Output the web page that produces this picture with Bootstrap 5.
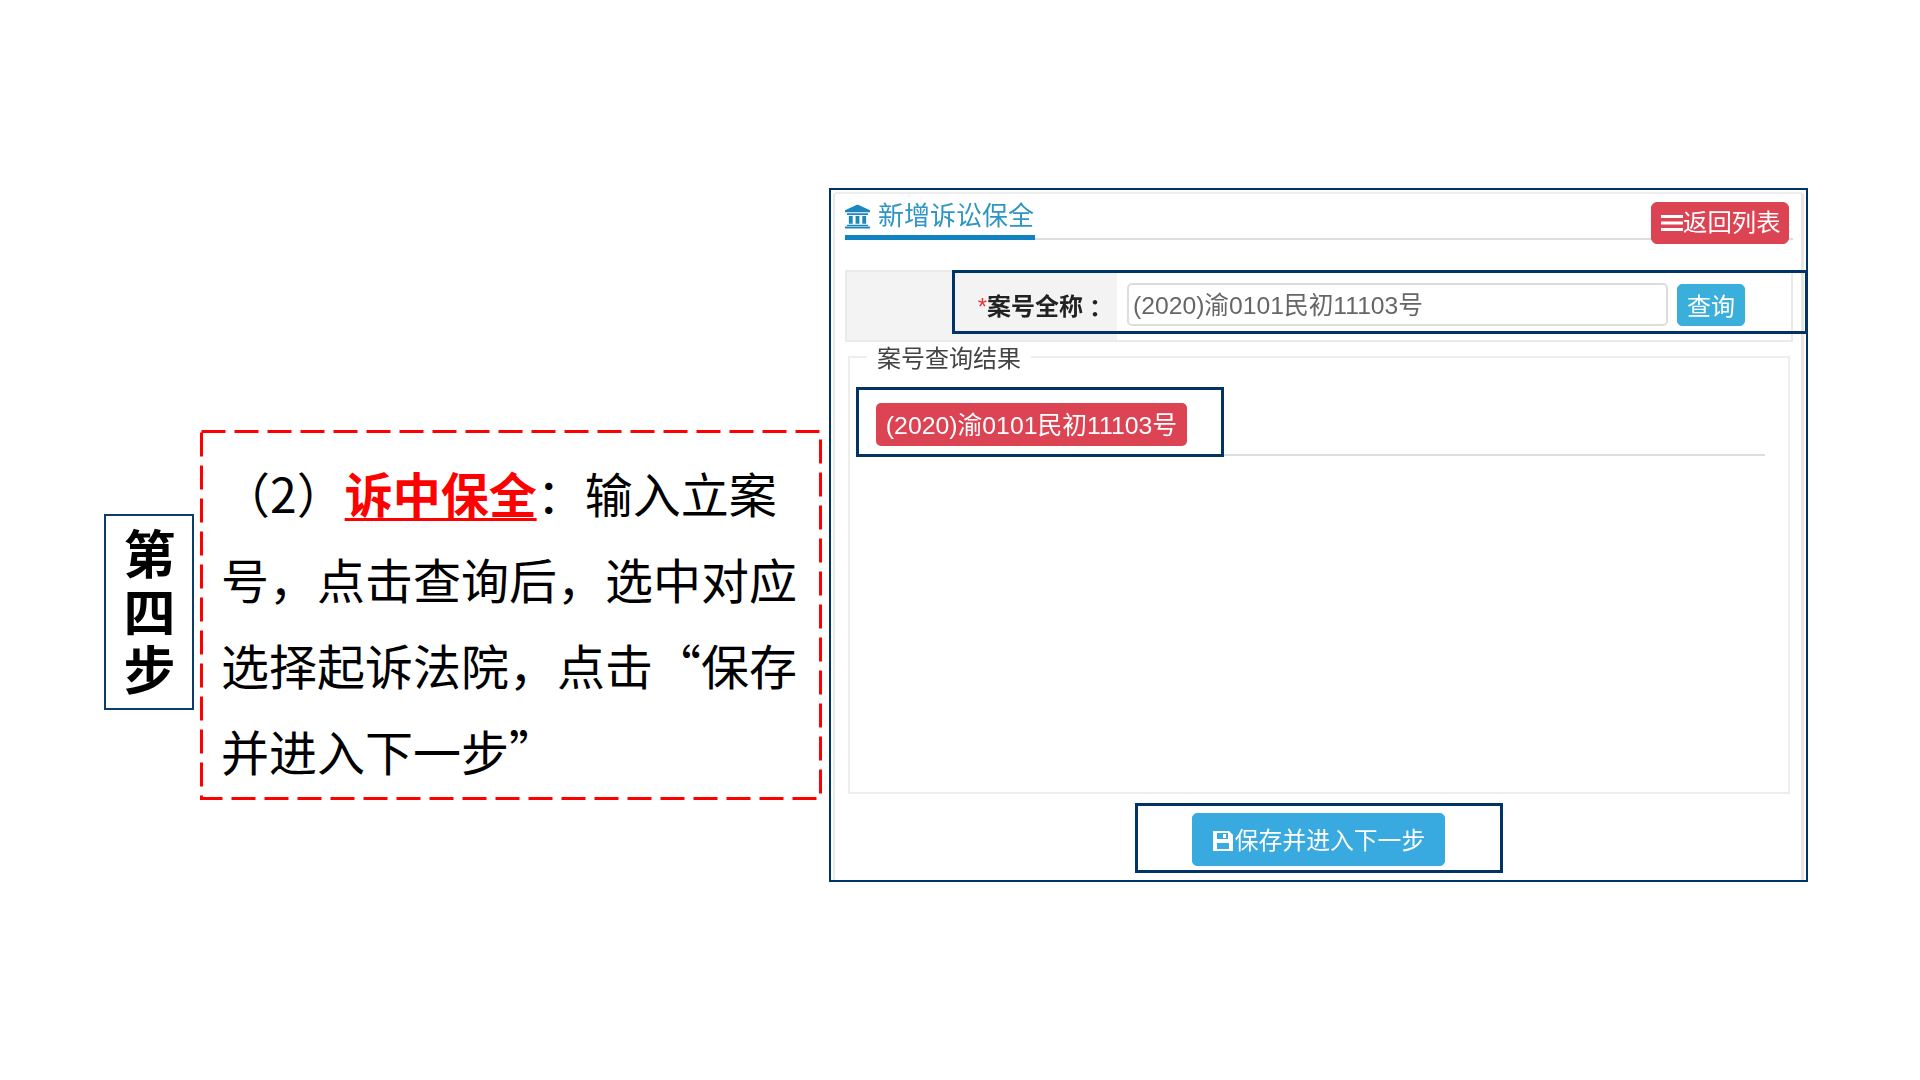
<!DOCTYPE html>
<html lang="zh-CN">
<head>
<meta charset="utf-8">
<title>新增诉讼保全</title>
<link href="https://cdn.jsdelivr.net/npm/bootstrap@5.3.0/dist/css/bootstrap.min.css" rel="stylesheet">
<style>
html,body{height:100%;background:#fff;overflow:hidden}
body{font-family:"Liberation Sans","Noto Sans CJK SC",sans-serif}
.stage{height:1080px;padding:188px 0 0 104px}
.step-box{width:90px;height:196px;margin-top:326px;border:2px solid #0b3c6f;font:700 52px/1 "Noto Sans CJK SC",sans-serif;color:#000}
.step-text{writing-mode:vertical-rl;text-orientation:upright;letter-spacing:6px;padding-top:5px}
.note-box{position:relative;width:622px;height:370px;margin:242px 0 0 6px;padding:19px 0 0 21px;font:400 48px/86px "Noto Sans CJK SC",sans-serif;color:#000;white-space:nowrap}
.note-frame{position:absolute;inset:0;width:100%;height:100%;pointer-events:none}
.note-lead{padding-left:1px}
.note-hot{color:#f00;font-weight:700;text-decoration:underline;text-underline-offset:5px;text-decoration-thickness:3px}
.shot{position:relative;width:979px;height:694px;margin-left:7px;border:2px solid #003366;background:#fff}
.shot-inner{height:calc(100% - 2px);margin:2px 2px 0;border:solid #eee;border-width:2px 3px 0 2px;border-left-color:#e8e8ec;border-right-color:#e6e6e6;border-radius:4px 4px 0 0;filter:blur(.7px);padding:8px 1px 0 2px}
.tab-row{height:38px;margin:0 7px 0 8px;border-bottom:2px solid #ddd}
.tab-title{width:190px;height:38px;border-bottom:5px solid #0f82c0;padding-bottom:5px;color:#2f96c4;font-size:26px;line-height:1;white-space:nowrap}
.tab-icon{width:25px;height:25px;margin-right:8px;flex:none}
.btn-back{width:138px;height:42px;margin-right:4px;padding:0 0 0 9px;background:#dc4353;border:1px solid #dc4353;border-radius:6px;color:#fff;font-size:24.4px;line-height:1;white-space:nowrap}
.btn-back svg{width:22px;height:18px;flex:none}
.query-row{height:72px;margin:30px 7px 0 8px;border:2px solid #eaeaea}
.query-label{width:270px;background:#f3f3f3;padding:2px 10px 0 0;font-size:24px;font-weight:700;color:#222;white-space:nowrap}
.query-star{color:#e33;font-weight:400}
.query-colon{font-family:"Noto Sans CJK TC",sans-serif}
.query-input.form-control{width:541px;height:43px;margin:11px 0 0 10px;padding:0 4px 3px;border:2px solid #ddd;border-radius:5px;color:#666;font-size:24.7px;background:#fff;box-shadow:none}
.btn-query{width:68px;height:42px;margin:12px 0 0 9px;padding:4px 0 0;background:#3aafdc;border:1px solid #3aafdc;border-radius:5px;color:#fff;font-size:24px;line-height:1}
.result-set{height:451px;margin:1px 10px 0 11px;padding:0 0 0 16px;border:2px solid #eee}
.result-set legend{float:none;width:auto;margin:0 0 0 1px;padding:4px 10px 0;font-size:24px;line-height:24px;color:#444}
.result-row{height:85px;margin-right:23px;padding:32px 0 0 10px;border-bottom:2px solid #ddd}
.tag-case{display:block;width:311px;height:43px;background:#dc4353;border-radius:5px;color:#fff;font-size:24.8px;line-height:45px;text-align:center;white-space:nowrap}
.save-row{margin-top:19px}
.btn-save{width:253px;height:53px;padding:3px 0 0;background:#39aadf;border:1px solid #39aadf;border-radius:5px;color:#fff;font-size:23.8px;line-height:1;white-space:nowrap}
.btn-save svg{width:22px;height:22px;flex:none;margin-right:1px}
.callout{position:absolute;border:3px solid #003366;pointer-events:none}
.callout-query{left:121px;top:80px;right:-2px;height:64px}
.callout-result{left:25px;top:197px;width:368px;height:70px}
.callout-save{left:304px;top:613px;width:368px;height:70px}
</style>
</head>
<body>
<main class="stage d-flex align-items-start">
  <div class="step-box d-flex justify-content-center align-items-center"><div class="step-text">第四步</div></div>
  <div class="note-box">
    <svg class="note-frame" viewBox="0 0 622 370" aria-hidden="true"><rect x="1.5" y="1.5" width="619" height="367" fill="none" stroke="#f00" stroke-width="3" stroke-dasharray="24 9"/></svg>
    <div class="note-lead">（2）<span class="note-hot">诉中保全</span>：输入立案</div>
    <div>号，点击查询后，选中对应</div>
    <div>选择起诉法院，点击“保存</div>
    <div>并进入下一步”</div>
  </div>
  <section class="shot">
    <div class="shot-inner">
      <div class="tab-row d-flex justify-content-between align-items-start">
        <div class="tab-title d-flex align-items-center">
          <svg class="tab-icon" viewBox="0 0 26 25" aria-hidden="true"><path fill="#1c86bd" d="M13 0 26 6v2H0V6zM2 9h22v2H2zM4 12h4v8H4zM11 12h4v8h-4zM18 12h4v8h-4zM2 21h22v1.500H2zM0 23h26v2H0z"/></svg>
          新增诉讼保全
        </div>
        <button type="button" class="btn btn-back d-flex align-items-center">
          <svg viewBox="0 0 22 18" aria-hidden="true"><path fill="#fff" d="M0 1h22v3H0zM0 7.500h22v3H0zM0 14h22v3H0z"/></svg>返回列表
        </button>
      </div>
      <div class="query-row d-flex">
        <div class="query-label d-flex align-items-center justify-content-end"><span class="query-star">*</span>案号全称<span class="query-colon">：</span></div>
        <input class="form-control query-input" type="text" value="(2020)渝0101民初11103号" aria-label="案号全称">
        <button type="button" class="btn btn-query">查询</button>
      </div>
      <fieldset class="result-set">
        <legend>案号查询结果</legend>
        <div class="result-row"><span class="tag-case">(2020)渝0101民初11103号</span></div>
      </fieldset>
      <div class="save-row d-flex justify-content-center">
        <button type="button" class="btn btn-save d-flex align-items-center justify-content-center">
          <svg viewBox="0 0 22 22" aria-hidden="true"><path fill="#fff" fill-rule="evenodd" d="M1 1h16l4 4v16H1zM5 3v6h11V3zM11 4h3v4h-3zM5 13v6h12v-6z"/></svg>保存并进入下一步
        </button>
      </div>
    </div>
    <div class="callout callout-query"></div>
    <div class="callout callout-result"></div>
    <div class="callout callout-save"></div>
  </section>
</main>
<script src="https://cdn.jsdelivr.net/npm/bootstrap@5.3.0/dist/js/bootstrap.bundle.min.js"></script>
</body>
</html>
